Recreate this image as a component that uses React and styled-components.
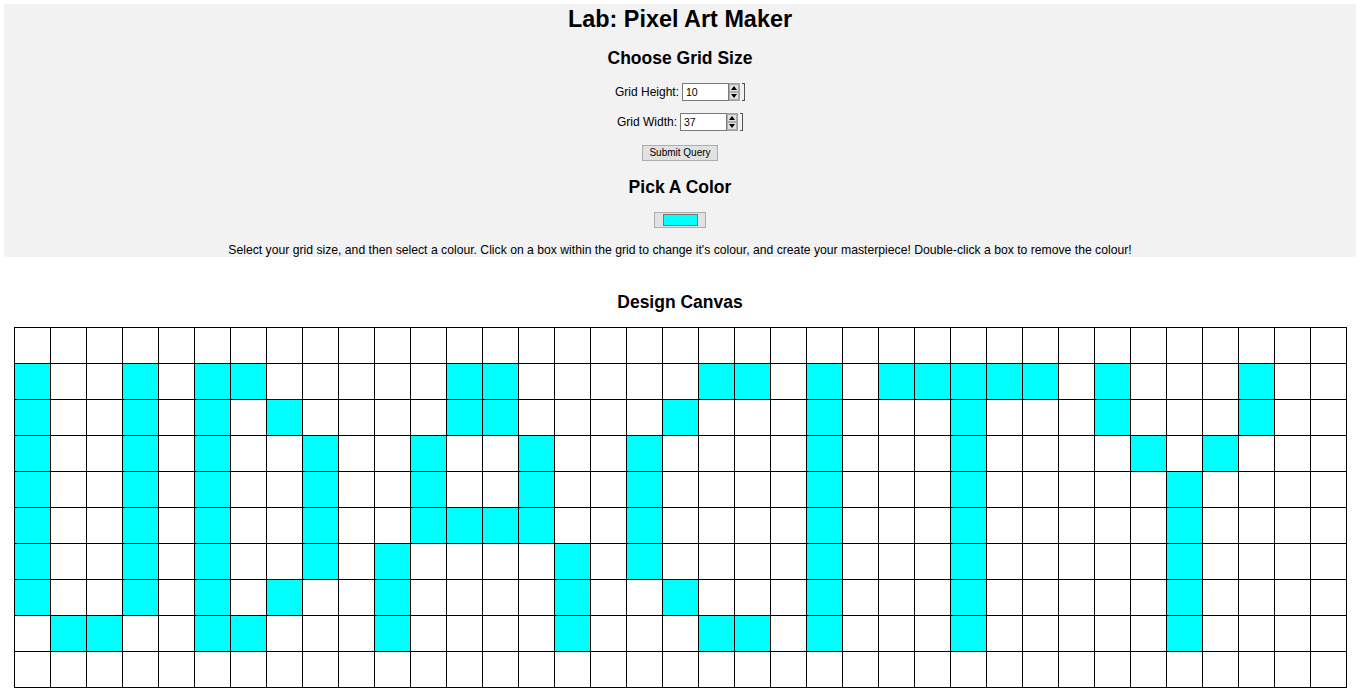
import React from "react";
import styled, { createGlobalStyle } from "styled-components";

const Global = createGlobalStyle`
  html, body { margin: 0; padding: 0; background: #fff; }
  body {
    margin: 4px 7px 0 4px;
    font-family: "Liberation Sans", Arial, sans-serif;
    font-size: 12px;
    color: #000;
  }
`;

const Panel = styled.header`
  background: #f2f2f2;
  padding-top: 1px;
  display: flex;
  flex-direction: column;
  align-items: center;
`;

const Title = styled.h1`
  margin: 0;
  font-size: 23.4px;
  line-height: 28px;
  font-weight: bold;
`;

const Heading = styled.h2`
  margin: ${(p) => p.$top}px 0 0;
  font-size: 17.5px;
  line-height: 22px;
  font-weight: bold;
`;

const Form = styled.form`
  display: flex;
  flex-direction: column;
  align-items: center;
  margin-top: 14px;
  gap: 12px;
`;

const FieldRow = styled.label`
  display: flex;
  align-items: center;
  gap: 3px;
  height: 18px;
  font-size: 12px;
`;

const NumberBox = styled.div`
  display: flex;
  align-items: stretch;
  height: 18px;
`;

const TextBox = styled.span`
  box-sizing: border-box;
  width: 47px;
  height: 18px;
  border: 1px solid #7a7a7a;
  background: #fff;
  font-size: 10.5px;
  line-height: 16px;
  padding-left: 3px;
`;

const Spinner = styled.span`
  display: flex;
  flex-direction: column;
  width: 11px;
  height: 18px;
  box-sizing: border-box;
  border: 1px solid #a0a0a0;
  border-left: none;
  background: #fff;
`;

const SpinBtn = styled.span`
  flex: 1;
  display: flex;
  align-items: center;
  justify-content: center;
  background: #e1e1e1;
  border: 1px solid #adadad;
  margin: 0;
  &::after {
    content: "";
    width: 0;
    height: 0;
    border-left: 3px solid transparent;
    border-right: 3px solid transparent;
    ${(p) =>
      p.$up
        ? "border-bottom: 4px solid #000;"
        : "border-top: 4px solid #000;"}
  }
`;

const Bracket = styled.span`
  width: 3px;
  margin-left: 2px;
  height: 18px;
  box-sizing: border-box;
  border: 1px solid #555;
  border-left: none;
`;

const SubmitButton = styled.button`
  box-sizing: border-box;
  width: 76px;
  height: 16px;
  margin-top: 2px;
  padding: 0;
  background: #e1e1e1;
  border: 1px solid #adadad;
  font-family: "Liberation Sans", Arial, sans-serif;
  font-size: 10px;
  line-height: 14px;
  color: #000;
`;

const ColorWell = styled.div`
  box-sizing: border-box;
  width: 52px;
  height: 16px;
  margin-top: 14px;
  background: #e1e1e1;
  border: 1px solid #adadad;
  display: flex;
  align-items: center;
  justify-content: center;
`;

const Swatch = styled.span`
  box-sizing: border-box;
  width: 35px;
  height: 12px;
  background: ${(p) => p.$color};
  border: 1px solid #777;
`;

const Description = styled.p`
  margin: 15px 0 0;
  font-size: 12.2px;
  line-height: 14px;
  text-align: center;
`;

const Main = styled.main`
  display: flex;
  flex-direction: column;
  align-items: center;
`;

const CanvasGrid = styled.div`
  margin-top: 14px;
  display: grid;
  grid-template-columns: repeat(${(p) => p.$cols}, 35px);
  grid-auto-rows: 35px;
  gap: 1px;
  padding: 1px;
  background: #000;
`;

const Cell = styled.div`
  background: ${(p) => (p.$filled ? "#00ffff" : "#fff")};
`;

const ROWS = 10;
const COLS = 37;
const painted = {
  1: [0, 3, 5, 6, 12, 13, 19, 20, 22, 24, 25, 26, 27, 28, 30, 34],
  2: [0, 3, 5, 7, 12, 13, 18, 22, 26, 30, 34],
  3: [0, 3, 5, 8, 11, 14, 17, 22, 26, 31, 33],
  4: [0, 3, 5, 8, 11, 14, 17, 22, 26, 32],
  5: [0, 3, 5, 8, 11, 12, 13, 14, 17, 22, 26, 32],
  6: [0, 3, 5, 8, 10, 15, 17, 22, 26, 32],
  7: [0, 3, 5, 7, 10, 15, 18, 22, 26, 32],
  8: [1, 2, 5, 6, 10, 15, 19, 20, 22, 26, 32],
};

function NumberField({ label, value }) {
  return (
    <FieldRow>
      <span>{label}</span>
      <NumberBox>
        <TextBox>{value}</TextBox>
        <Spinner>
          <SpinBtn $up />
          <SpinBtn />
        </Spinner>
        <Bracket />
      </NumberBox>
    </FieldRow>
  );
}

export default function App() {
  const cells = [];
  for (let r = 0; r < ROWS; r++) {
    const set = painted[r] || [];
    for (let c = 0; c < COLS; c++) {
      cells.push(<Cell key={`${r}-${c}`} $filled={set.includes(c)} />);
    }
  }
  return (
    <>
      <Global />
      <Panel>
        <Title>Lab: Pixel Art Maker</Title>
        <Heading $top={14}>Choose Grid Size</Heading>
        <Form onSubmit={(e) => e.preventDefault()}>
          <NumberField label="Grid Height:" value="10" />
          <NumberField label="Grid Width:" value="37" />
          <SubmitButton type="submit">Submit Query</SubmitButton>
        </Form>
        <Heading $top={15}>Pick A Color</Heading>
        <ColorWell>
          <Swatch $color="#00ffff" />
        </ColorWell>
        <Description>
          Select your grid size, and then select a colour. Click on a box within the grid to change it's colour, and create your masterpiece! Double-click a box to remove the colour!
        </Description>
      </Panel>
      <Main>
        <Heading $top={34}>Design Canvas</Heading>
        <CanvasGrid $cols={COLS}>{cells}</CanvasGrid>
      </Main>
    </>
  );
}
